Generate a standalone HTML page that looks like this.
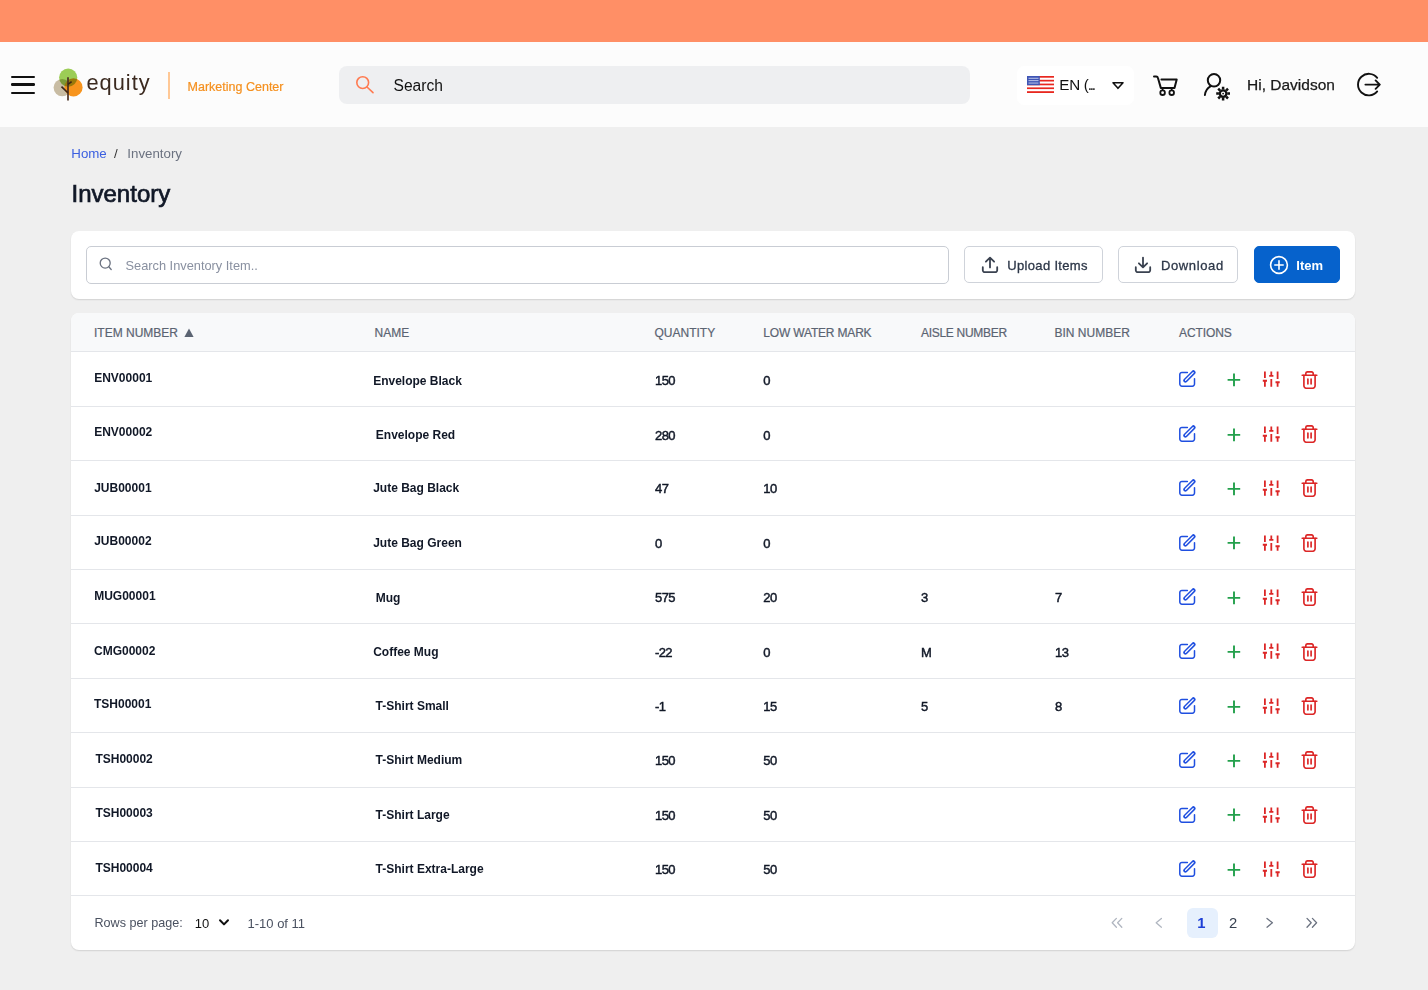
<!DOCTYPE html>
<html><head><meta charset="utf-8">
<title>Inventory</title>
<style>
*{box-sizing:border-box;margin:0;padding:0}
html,body{width:1428px;height:990px;overflow:hidden;background:#efefef;font-family:"Liberation Sans",sans-serif;color:#1f2937;position:relative}
.t{position:absolute;line-height:1;white-space:nowrap}
.ico{position:absolute;line-height:0}
.ic{display:block}
#topbar{position:absolute;left:0;top:0;width:1428px;height:42px;background:#ff8f66}
#header{position:absolute;left:0;top:42px;width:1428px;height:85px;background:#fcfcfc}
.ham{position:absolute;left:10.5px;width:24.5px;height:2.3px;background:#111;border-radius:1.2px}
#search{position:absolute;left:338.5px;top:65.8px;width:631.5px;height:38px;background:#eeeff1;border-radius:8px}
#lang{position:absolute;left:1017px;top:66px;width:117px;height:38.5px;background:#fff;border-radius:7px}
.card{position:absolute;left:71px;width:1284px;background:#fff;border-radius:8px;box-shadow:0 1px 1.5px rgba(0,0,0,0.12)}
#tb{top:230.5px;height:68px}
#sinput{position:absolute;left:86px;top:246px;width:863px;height:38px;border:1px solid #c9cdd4;border-radius:5px}
.btn{position:absolute;top:246.4px;height:36.3px;border:1px solid #cfd3da;border-radius:5px;background:#fff}
#table{top:313.4px;height:636.7px;overflow:hidden}
#thead{position:absolute;left:71px;top:313.4px;width:1284px;height:38.1px;background:#f8f9fa;border-radius:8px 8px 0 0}
.rl{position:absolute;left:71px;width:1284px;height:1px;background:#e4e6ea}
.th{color:#5b6472;-webkit-text-stroke:0.2px #5b6472}
</style></head><body>
<div id="topbar"></div>
<div id="header">
  <div class="ham" style="top:33.5px"></div>
  <div class="ham" style="top:41.3px"></div>
  <div class="ham" style="top:49.6px"></div>
</div>

<!-- logo -->
<svg style="position:absolute;left:50px;top:64px" width="36" height="40" viewBox="0 0 36 40">
  <circle cx="12.2" cy="23.6" r="8.6" fill="#c8bca3"/>
  <circle cx="23.5" cy="23.4" r="9.1" fill="#f7941d"/>
  <circle cx="18.2" cy="13.6" r="9.1" fill="#8dc83a" style="mix-blend-mode:multiply" fill-opacity="0.85"/>
  <path d="M18 13.3V36.6" stroke="#4a3020" stroke-width="1.7"/>
  <path d="M11.5 22.6L17.8 28.7M18 20.4L21.6 17.6" stroke="#3a2418" stroke-width="1.6" fill="none"/>
</svg>
<div class="t" style="left:86.5px;top:72.4px;font-size:21.8px;color:#3b2a20;letter-spacing:1px">equity</div>
<div style="position:absolute;left:168px;top:72.4px;width:1.6px;height:26.4px;background:#ffc896"></div>
<div class="t" style="left:187.6px;top:80.9px;font-size:12.5px;color:#f5901e;-webkit-text-stroke:0.2px #f5901e">Marketing Center</div>

<div id="search"></div>
<svg style="position:absolute;left:354px;top:74px" width="22" height="22" viewBox="0 0 22 22" fill="none" stroke="#ff7a50" stroke-width="1.6" stroke-linecap="round"><circle cx="8.7" cy="8.6" r="5.9"/><path d="M13 13L19 18.7"/></svg>
<div class="t" style="left:393.5px;top:77.6px;font-size:15.6px;color:#111">Search</div>

<div id="lang"></div>
<svg style="position:absolute;left:1026.8px;top:75.9px" width="27.4" height="17" viewBox="0 0 27.4 17">
  <rect width="27.4" height="17" fill="#fff"/>
  <rect y="0" width="27.4" height="1.7" fill="#e8271f"/>
  <rect y="3.8" width="27.4" height="1.7" fill="#e8271f"/>
  <rect y="7.6" width="27.4" height="1.7" fill="#e8271f"/>
  <rect y="11.4" width="27.4" height="1.7" fill="#e8271f"/>
  <rect y="15.2" width="27.4" height="1.8" fill="#e8271f"/>
  <rect width="12.8" height="9.2" fill="#3f55b5"/>
  <g fill="#c9d0f0"><rect x="1.5" y="1.8" width="10" height="0.9"/><rect x="1.5" y="4.2" width="10" height="0.9"/><rect x="1.5" y="6.6" width="10" height="0.9"/></g>
</svg>
<div class="t" style="left:1059.3px;top:77.3px;font-size:15.2px;color:#111;letter-spacing:-0.3px">EN (<span style="font-size:10px;font-weight:bold;letter-spacing:-0.8px">...</span></div>
<svg style="position:absolute;left:1110px;top:80px" width="16" height="11" viewBox="0 0 16 11" fill="none" stroke="#111" stroke-width="1.6" stroke-linejoin="round"><path d="M3 2.8H13L8 8.3Z"/></svg>

<!-- cart -->
<svg style="position:absolute;left:1151px;top:73px" width="30" height="24" viewBox="0 0 30 24" fill="none" stroke="#111" stroke-width="2" stroke-linecap="round" stroke-linejoin="round">
  <path d="M3 3.4H5.2Q6.6 3.4 6.9 4.8L9.8 14.9H23.5L25.7 6.4H10.4"/>
  <path d="M11.6 14.9V17.3M20.7 14.9V17.3" stroke-width="1.6"/>
  <circle cx="11.6" cy="19.7" r="2.3" stroke-width="1.8"/><circle cx="20.7" cy="19.7" r="2.3" stroke-width="1.8"/>
</svg>
<!-- user gear -->
<svg style="position:absolute;left:1200px;top:70px" width="34" height="32" viewBox="0 0 34 32" fill="none" stroke="#111" stroke-width="2" stroke-linecap="round">
  <circle cx="14" cy="10.3" r="6.2"/>
  <path d="M4.9 25A11.5 11.5 0 0 1 10.4 16.4"/>
  <g transform="translate(23.1 23.6)">
    <circle r="3.3" stroke-width="2.3"/>
    <circle r="0.9" fill="#111" stroke="none"/>
    <path d="M0 -6.9V-4.2M0 4.2V6.9M-6.9 0H-4.2M4.2 0H6.9M-4.9 -4.9L-3 -3M3 3L4.9 4.9M-4.9 4.9L-3 3M3 -3L4.9 -4.9" stroke-width="2.5" stroke-linecap="butt"/>
  </g>
</svg>
<div class="t" style="left:1247px;top:77px;font-size:15.5px;color:#1a1a1a;-webkit-text-stroke:0.25px #1a1a1a">Hi, Davidson</div>
<!-- logout -->
<svg style="position:absolute;left:1354px;top:70px" width="32" height="30" viewBox="0 0 32 30" fill="none" stroke="#111" stroke-width="1.9" stroke-linecap="round" stroke-linejoin="round">
  <path d="M23.2 7.8A10.8 10.8 0 1 0 23.2 21.4"/>
  <path d="M11.4 14.6H25.8M21.6 10.4L25.8 14.6L21.6 18.8"/>
</svg>

<!-- breadcrumb & title -->
<div class="t" style="left:71.3px;top:146.6px;font-size:13.3px;color:#3b5fe0">Home</div>
<div class="t" style="left:114px;top:146.6px;font-size:13.3px;color:#333">/</div>
<div class="t" style="left:127.3px;top:146.6px;font-size:13.3px;color:#6b7280">Inventory</div>
<div class="t" style="left:71.5px;top:181.7px;font-size:24px;color:#111827;-webkit-text-stroke:0.7px #111827">Inventory</div>

<!-- toolbar card -->
<div class="card" id="tb"></div>
<div id="sinput"></div>
<svg style="position:absolute;left:97px;top:255px" width="18" height="18" viewBox="0 0 18 18" fill="none" stroke="#6b7280" stroke-width="1.3" stroke-linecap="round"><circle cx="8.2" cy="8.1" r="5"/><path d="M11.8 11.8L14.2 14.5"/></svg>
<div class="t" style="left:125.5px;top:259.9px;font-size:12.8px;color:#8990a0">Search Inventory Item..</div>

<div class="btn" style="left:964.2px;width:139.3px"></div>
<svg style="position:absolute;left:980px;top:255px" width="20" height="20" viewBox="0 0 20 20" fill="none" stroke="#3a4250" stroke-width="1.8" stroke-linecap="round" stroke-linejoin="round"><path d="M2.8 12.2V15.2A2 2 0 0 0 4.8 17.2H15.2A2 2 0 0 0 17.2 15.2V12.2"/><path d="M10 12.4V2.8M5.9 6.7L10 2.6L14.1 6.7"/></svg>
<div class="t" style="left:1007.3px;top:259px;font-size:13px;color:#2d3748;-webkit-text-stroke:0.3px #2d3748;letter-spacing:0.33px">Upload Items</div>

<div class="btn" style="left:1118.4px;width:119.3px"></div>
<svg style="position:absolute;left:1133.2px;top:255px" width="20" height="20" viewBox="0 0 20 20" fill="none" stroke="#3a4250" stroke-width="1.8" stroke-linecap="round" stroke-linejoin="round"><path d="M2.8 12.2V15.2A2 2 0 0 0 4.8 17.2H15.2A2 2 0 0 0 17.2 15.2V12.2"/><path d="M10 2.6V12.2M5.9 8.3L10 12.4L14.1 8.3"/></svg>
<div class="t" style="left:1161px;top:259px;font-size:13px;color:#2d3748;-webkit-text-stroke:0.3px #2d3748;letter-spacing:0.62px">Download</div>

<div class="btn" style="left:1253.7px;width:86.2px;background:#0662cc;border-color:#0662cc"></div>
<svg style="position:absolute;left:1268.7px;top:255.2px" width="20" height="20" viewBox="0 0 20 20" fill="none" stroke="#fff" stroke-width="1.6" stroke-linecap="round"><circle cx="10" cy="10" r="8.4"/><path d="M10 5.8V14.2M5.8 10H14.2"/></svg>
<div class="t" style="left:1296.3px;top:259.3px;font-size:13px;font-weight:bold;color:#fff">Item</div>

<!-- table card -->
<div class="card" id="table"></div>
<div id="thead"></div>
<div class="rl" style="top:351px"></div>
<div class="t th" style="left:94px;top:327.2px;font-size:12px">ITEM NUMBER</div>
<svg style="position:absolute;left:183.5px;top:327.5px" width="10" height="10" viewBox="0 0 10 10"><path d="M5 0.6L9.6 9H0.4Z" fill="#5b6472"/></svg>
<div class="t th" style="left:374.5px;top:327.2px;font-size:12px">NAME</div>
<div class="t th" style="left:654.5px;top:327.2px;font-size:12px">QUANTITY</div>
<div class="t th" style="left:763.3px;top:327.2px;font-size:12px;letter-spacing:-0.18px">LOW WATER MARK</div>
<div class="t th" style="left:921px;top:327.2px;font-size:12px;letter-spacing:-0.3px">AISLE NUMBER</div>
<div class="t th" style="left:1054.5px;top:327.2px;font-size:12px">BIN NUMBER</div>
<div class="t th" style="left:1179px;top:327.2px;font-size:12px;letter-spacing:-0.1px">ACTIONS</div>

<div class="rl" style="top:405.80px"></div>
<div class="t" style="left:94.2px;top:371.74px;font-size:12px;font-weight:bold;color:#111827">ENV00001</div>
<div class="t" style="left:373.2px;top:374.84px;font-size:12px;font-weight:bold;color:#111827">Envelope Black</div>
<div class="t" style="left:655.0px;top:374.15px;font-size:13px;color:#111827;letter-spacing:-0.6px;-webkit-text-stroke:0.45px #111827">150</div>
<div class="t" style="left:763.3px;top:374.15px;font-size:13px;color:#111827;letter-spacing:-0.6px;-webkit-text-stroke:0.45px #111827">0</div>
<div class="ico" style="left:1177.8px;top:370.40px"><svg class="ic" width="18" height="18" viewBox="0 0 18 18" fill="none" stroke="#1f4fe0" stroke-width="1.5" stroke-linecap="round" stroke-linejoin="round"><path d="M9.4 2.4H3.9A2.1 2.1 0 0 0 1.8 4.5V14.1A2.1 2.1 0 0 0 3.9 16.2H14.4A2.1 2.1 0 0 0 16.5 14.1V8.7"/><path d="M7.4 10.4L15.4 2.4" stroke-width="4.3"/><path d="M7.6 10.2L15.2 2.6" stroke="#fff" stroke-width="1.3"/></svg></div>
<div class="ico" style="left:1226.6px;top:373.10px"><svg class="ic" width="14" height="14" viewBox="0 0 14 14" fill="none" stroke="#23a04c" stroke-width="1.9"><path d="M7 0.6V13.2M0.6 6.9H13.2"/></svg></div>
<div class="ico" style="left:1262.3px;top:371.40px"><svg class="ic" width="18" height="17" viewBox="0 0 18 17" fill="none" stroke="#dc2626" stroke-width="1.8" stroke-linecap="butt"><path d="M2.9 0.6V6.9M2.9 9.7V15.7M0.8 9.75H5M9.3 0.6V5.8M7.2 4.95H11.4M9.3 8.1V15.7M15.6 0.6V8.1M13.5 11.25H17.7M15.6 11.25V15.7"/></svg></div>
<div class="ico" style="left:1300.8px;top:370.50px"><svg class="ic" width="17" height="18" viewBox="0 0 17 18" fill="none" stroke="#dc2626" stroke-width="1.65" stroke-linecap="round" stroke-linejoin="round"><path d="M1.2 4.2H15.8"/><path d="M4.8 4.2V2.6A1.8 1.8 0 0 1 6.6 0.8H10.4A1.8 1.8 0 0 1 12.2 2.6V4.2"/><path d="M2.9 4.2V14.8A2.4 2.4 0 0 0 5.3 17.2H11.7A2.4 2.4 0 0 0 14.1 14.8V4.2"/><path d="M6.9 8V13M10.1 8V13"/></svg></div>
<div class="rl" style="top:460.20px"></div>
<div class="t" style="left:94.2px;top:426.34px;font-size:12px;font-weight:bold;color:#111827">ENV00002</div>
<div class="t" style="left:375.8px;top:429.04px;font-size:12px;font-weight:bold;color:#111827">Envelope Red</div>
<div class="t" style="left:655.0px;top:428.55px;font-size:13px;color:#111827;letter-spacing:-0.6px;-webkit-text-stroke:0.45px #111827">280</div>
<div class="t" style="left:763.3px;top:428.55px;font-size:13px;color:#111827;letter-spacing:-0.6px;-webkit-text-stroke:0.45px #111827">0</div>
<div class="ico" style="left:1177.8px;top:424.80px"><svg class="ic" width="18" height="18" viewBox="0 0 18 18" fill="none" stroke="#1f4fe0" stroke-width="1.5" stroke-linecap="round" stroke-linejoin="round"><path d="M9.4 2.4H3.9A2.1 2.1 0 0 0 1.8 4.5V14.1A2.1 2.1 0 0 0 3.9 16.2H14.4A2.1 2.1 0 0 0 16.5 14.1V8.7"/><path d="M7.4 10.4L15.4 2.4" stroke-width="4.3"/><path d="M7.6 10.2L15.2 2.6" stroke="#fff" stroke-width="1.3"/></svg></div>
<div class="ico" style="left:1226.6px;top:427.50px"><svg class="ic" width="14" height="14" viewBox="0 0 14 14" fill="none" stroke="#23a04c" stroke-width="1.9"><path d="M7 0.6V13.2M0.6 6.9H13.2"/></svg></div>
<div class="ico" style="left:1262.3px;top:425.80px"><svg class="ic" width="18" height="17" viewBox="0 0 18 17" fill="none" stroke="#dc2626" stroke-width="1.8" stroke-linecap="butt"><path d="M2.9 0.6V6.9M2.9 9.7V15.7M0.8 9.75H5M9.3 0.6V5.8M7.2 4.95H11.4M9.3 8.1V15.7M15.6 0.6V8.1M13.5 11.25H17.7M15.6 11.25V15.7"/></svg></div>
<div class="ico" style="left:1300.8px;top:424.90px"><svg class="ic" width="17" height="18" viewBox="0 0 17 18" fill="none" stroke="#dc2626" stroke-width="1.65" stroke-linecap="round" stroke-linejoin="round"><path d="M1.2 4.2H15.8"/><path d="M4.8 4.2V2.6A1.8 1.8 0 0 1 6.6 0.8H10.4A1.8 1.8 0 0 1 12.2 2.6V4.2"/><path d="M2.9 4.2V14.8A2.4 2.4 0 0 0 5.3 17.2H11.7A2.4 2.4 0 0 0 14.1 14.8V4.2"/><path d="M6.9 8V13M10.1 8V13"/></svg></div>
<div class="rl" style="top:514.60px"></div>
<div class="t" style="left:94.2px;top:481.54px;font-size:12px;font-weight:bold;color:#111827">JUB00001</div>
<div class="t" style="left:373.2px;top:482.34px;font-size:12px;font-weight:bold;color:#111827">Jute Bag Black</div>
<div class="t" style="left:655.0px;top:482.35px;font-size:13px;color:#111827;letter-spacing:-0.6px;-webkit-text-stroke:0.45px #111827">47</div>
<div class="t" style="left:763.3px;top:482.35px;font-size:13px;color:#111827;letter-spacing:-0.6px;-webkit-text-stroke:0.45px #111827">10</div>
<div class="ico" style="left:1177.8px;top:479.20px"><svg class="ic" width="18" height="18" viewBox="0 0 18 18" fill="none" stroke="#1f4fe0" stroke-width="1.5" stroke-linecap="round" stroke-linejoin="round"><path d="M9.4 2.4H3.9A2.1 2.1 0 0 0 1.8 4.5V14.1A2.1 2.1 0 0 0 3.9 16.2H14.4A2.1 2.1 0 0 0 16.5 14.1V8.7"/><path d="M7.4 10.4L15.4 2.4" stroke-width="4.3"/><path d="M7.6 10.2L15.2 2.6" stroke="#fff" stroke-width="1.3"/></svg></div>
<div class="ico" style="left:1226.6px;top:481.90px"><svg class="ic" width="14" height="14" viewBox="0 0 14 14" fill="none" stroke="#23a04c" stroke-width="1.9"><path d="M7 0.6V13.2M0.6 6.9H13.2"/></svg></div>
<div class="ico" style="left:1262.3px;top:480.20px"><svg class="ic" width="18" height="17" viewBox="0 0 18 17" fill="none" stroke="#dc2626" stroke-width="1.8" stroke-linecap="butt"><path d="M2.9 0.6V6.9M2.9 9.7V15.7M0.8 9.75H5M9.3 0.6V5.8M7.2 4.95H11.4M9.3 8.1V15.7M15.6 0.6V8.1M13.5 11.25H17.7M15.6 11.25V15.7"/></svg></div>
<div class="ico" style="left:1300.8px;top:479.30px"><svg class="ic" width="17" height="18" viewBox="0 0 17 18" fill="none" stroke="#dc2626" stroke-width="1.65" stroke-linecap="round" stroke-linejoin="round"><path d="M1.2 4.2H15.8"/><path d="M4.8 4.2V2.6A1.8 1.8 0 0 1 6.6 0.8H10.4A1.8 1.8 0 0 1 12.2 2.6V4.2"/><path d="M2.9 4.2V14.8A2.4 2.4 0 0 0 5.3 17.2H11.7A2.4 2.4 0 0 0 14.1 14.8V4.2"/><path d="M6.9 8V13M10.1 8V13"/></svg></div>
<div class="rl" style="top:569.00px"></div>
<div class="t" style="left:94.2px;top:535.34px;font-size:12px;font-weight:bold;color:#111827">JUB00002</div>
<div class="t" style="left:373.2px;top:536.74px;font-size:12px;font-weight:bold;color:#111827">Jute Bag Green</div>
<div class="t" style="left:655.0px;top:536.75px;font-size:13px;color:#111827;letter-spacing:-0.6px;-webkit-text-stroke:0.45px #111827">0</div>
<div class="t" style="left:763.3px;top:536.75px;font-size:13px;color:#111827;letter-spacing:-0.6px;-webkit-text-stroke:0.45px #111827">0</div>
<div class="ico" style="left:1177.8px;top:533.60px"><svg class="ic" width="18" height="18" viewBox="0 0 18 18" fill="none" stroke="#1f4fe0" stroke-width="1.5" stroke-linecap="round" stroke-linejoin="round"><path d="M9.4 2.4H3.9A2.1 2.1 0 0 0 1.8 4.5V14.1A2.1 2.1 0 0 0 3.9 16.2H14.4A2.1 2.1 0 0 0 16.5 14.1V8.7"/><path d="M7.4 10.4L15.4 2.4" stroke-width="4.3"/><path d="M7.6 10.2L15.2 2.6" stroke="#fff" stroke-width="1.3"/></svg></div>
<div class="ico" style="left:1226.6px;top:536.30px"><svg class="ic" width="14" height="14" viewBox="0 0 14 14" fill="none" stroke="#23a04c" stroke-width="1.9"><path d="M7 0.6V13.2M0.6 6.9H13.2"/></svg></div>
<div class="ico" style="left:1262.3px;top:534.60px"><svg class="ic" width="18" height="17" viewBox="0 0 18 17" fill="none" stroke="#dc2626" stroke-width="1.8" stroke-linecap="butt"><path d="M2.9 0.6V6.9M2.9 9.7V15.7M0.8 9.75H5M9.3 0.6V5.8M7.2 4.95H11.4M9.3 8.1V15.7M15.6 0.6V8.1M13.5 11.25H17.7M15.6 11.25V15.7"/></svg></div>
<div class="ico" style="left:1300.8px;top:533.70px"><svg class="ic" width="17" height="18" viewBox="0 0 17 18" fill="none" stroke="#dc2626" stroke-width="1.65" stroke-linecap="round" stroke-linejoin="round"><path d="M1.2 4.2H15.8"/><path d="M4.8 4.2V2.6A1.8 1.8 0 0 1 6.6 0.8H10.4A1.8 1.8 0 0 1 12.2 2.6V4.2"/><path d="M2.9 4.2V14.8A2.4 2.4 0 0 0 5.3 17.2H11.7A2.4 2.4 0 0 0 14.1 14.8V4.2"/><path d="M6.9 8V13M10.1 8V13"/></svg></div>
<div class="rl" style="top:623.40px"></div>
<div class="t" style="left:94.2px;top:590.04px;font-size:12px;font-weight:bold;color:#111827">MUG00001</div>
<div class="t" style="left:375.8px;top:591.84px;font-size:12px;font-weight:bold;color:#111827">Mug</div>
<div class="t" style="left:655.0px;top:591.35px;font-size:13px;color:#111827;letter-spacing:-0.6px;-webkit-text-stroke:0.45px #111827">575</div>
<div class="t" style="left:763.3px;top:591.35px;font-size:13px;color:#111827;letter-spacing:-0.6px;-webkit-text-stroke:0.45px #111827">20</div>
<div class="t" style="left:921.0px;top:591.35px;font-size:13px;color:#111827;letter-spacing:-0.6px;-webkit-text-stroke:0.45px #111827">3</div>
<div class="t" style="left:1055.0px;top:591.35px;font-size:13px;color:#111827;letter-spacing:-0.6px;-webkit-text-stroke:0.45px #111827">7</div>
<div class="ico" style="left:1177.8px;top:588.00px"><svg class="ic" width="18" height="18" viewBox="0 0 18 18" fill="none" stroke="#1f4fe0" stroke-width="1.5" stroke-linecap="round" stroke-linejoin="round"><path d="M9.4 2.4H3.9A2.1 2.1 0 0 0 1.8 4.5V14.1A2.1 2.1 0 0 0 3.9 16.2H14.4A2.1 2.1 0 0 0 16.5 14.1V8.7"/><path d="M7.4 10.4L15.4 2.4" stroke-width="4.3"/><path d="M7.6 10.2L15.2 2.6" stroke="#fff" stroke-width="1.3"/></svg></div>
<div class="ico" style="left:1226.6px;top:590.70px"><svg class="ic" width="14" height="14" viewBox="0 0 14 14" fill="none" stroke="#23a04c" stroke-width="1.9"><path d="M7 0.6V13.2M0.6 6.9H13.2"/></svg></div>
<div class="ico" style="left:1262.3px;top:589.00px"><svg class="ic" width="18" height="17" viewBox="0 0 18 17" fill="none" stroke="#dc2626" stroke-width="1.8" stroke-linecap="butt"><path d="M2.9 0.6V6.9M2.9 9.7V15.7M0.8 9.75H5M9.3 0.6V5.8M7.2 4.95H11.4M9.3 8.1V15.7M15.6 0.6V8.1M13.5 11.25H17.7M15.6 11.25V15.7"/></svg></div>
<div class="ico" style="left:1300.8px;top:588.10px"><svg class="ic" width="17" height="18" viewBox="0 0 17 18" fill="none" stroke="#dc2626" stroke-width="1.65" stroke-linecap="round" stroke-linejoin="round"><path d="M1.2 4.2H15.8"/><path d="M4.8 4.2V2.6A1.8 1.8 0 0 1 6.6 0.8H10.4A1.8 1.8 0 0 1 12.2 2.6V4.2"/><path d="M2.9 4.2V14.8A2.4 2.4 0 0 0 5.3 17.2H11.7A2.4 2.4 0 0 0 14.1 14.8V4.2"/><path d="M6.9 8V13M10.1 8V13"/></svg></div>
<div class="rl" style="top:677.80px"></div>
<div class="t" style="left:94.0px;top:644.74px;font-size:12px;font-weight:bold;color:#111827">CMG00002</div>
<div class="t" style="left:373.2px;top:646.34px;font-size:12px;font-weight:bold;color:#111827">Coffee Mug</div>
<div class="t" style="left:655.0px;top:645.85px;font-size:13px;color:#111827;letter-spacing:-0.6px;-webkit-text-stroke:0.45px #111827">-22</div>
<div class="t" style="left:763.3px;top:645.85px;font-size:13px;color:#111827;letter-spacing:-0.6px;-webkit-text-stroke:0.45px #111827">0</div>
<div class="t" style="left:921.0px;top:645.85px;font-size:13px;color:#111827;letter-spacing:-0.6px;-webkit-text-stroke:0.45px #111827">M</div>
<div class="t" style="left:1055.0px;top:645.85px;font-size:13px;color:#111827;letter-spacing:-0.6px;-webkit-text-stroke:0.45px #111827">13</div>
<div class="ico" style="left:1177.8px;top:642.40px"><svg class="ic" width="18" height="18" viewBox="0 0 18 18" fill="none" stroke="#1f4fe0" stroke-width="1.5" stroke-linecap="round" stroke-linejoin="round"><path d="M9.4 2.4H3.9A2.1 2.1 0 0 0 1.8 4.5V14.1A2.1 2.1 0 0 0 3.9 16.2H14.4A2.1 2.1 0 0 0 16.5 14.1V8.7"/><path d="M7.4 10.4L15.4 2.4" stroke-width="4.3"/><path d="M7.6 10.2L15.2 2.6" stroke="#fff" stroke-width="1.3"/></svg></div>
<div class="ico" style="left:1226.6px;top:645.10px"><svg class="ic" width="14" height="14" viewBox="0 0 14 14" fill="none" stroke="#23a04c" stroke-width="1.9"><path d="M7 0.6V13.2M0.6 6.9H13.2"/></svg></div>
<div class="ico" style="left:1262.3px;top:643.40px"><svg class="ic" width="18" height="17" viewBox="0 0 18 17" fill="none" stroke="#dc2626" stroke-width="1.8" stroke-linecap="butt"><path d="M2.9 0.6V6.9M2.9 9.7V15.7M0.8 9.75H5M9.3 0.6V5.8M7.2 4.95H11.4M9.3 8.1V15.7M15.6 0.6V8.1M13.5 11.25H17.7M15.6 11.25V15.7"/></svg></div>
<div class="ico" style="left:1300.8px;top:642.50px"><svg class="ic" width="17" height="18" viewBox="0 0 17 18" fill="none" stroke="#dc2626" stroke-width="1.65" stroke-linecap="round" stroke-linejoin="round"><path d="M1.2 4.2H15.8"/><path d="M4.8 4.2V2.6A1.8 1.8 0 0 1 6.6 0.8H10.4A1.8 1.8 0 0 1 12.2 2.6V4.2"/><path d="M2.9 4.2V14.8A2.4 2.4 0 0 0 5.3 17.2H11.7A2.4 2.4 0 0 0 14.1 14.8V4.2"/><path d="M6.9 8V13M10.1 8V13"/></svg></div>
<div class="rl" style="top:732.20px"></div>
<div class="t" style="left:94.0px;top:698.24px;font-size:12px;font-weight:bold;color:#111827">TSH00001</div>
<div class="t" style="left:375.6px;top:699.54px;font-size:12px;font-weight:bold;color:#111827">T-Shirt Small</div>
<div class="t" style="left:655.0px;top:699.65px;font-size:13px;color:#111827;letter-spacing:-0.6px;-webkit-text-stroke:0.45px #111827">-1</div>
<div class="t" style="left:763.3px;top:699.65px;font-size:13px;color:#111827;letter-spacing:-0.6px;-webkit-text-stroke:0.45px #111827">15</div>
<div class="t" style="left:921.0px;top:699.65px;font-size:13px;color:#111827;letter-spacing:-0.6px;-webkit-text-stroke:0.45px #111827">5</div>
<div class="t" style="left:1055.0px;top:699.65px;font-size:13px;color:#111827;letter-spacing:-0.6px;-webkit-text-stroke:0.45px #111827">8</div>
<div class="ico" style="left:1177.8px;top:696.80px"><svg class="ic" width="18" height="18" viewBox="0 0 18 18" fill="none" stroke="#1f4fe0" stroke-width="1.5" stroke-linecap="round" stroke-linejoin="round"><path d="M9.4 2.4H3.9A2.1 2.1 0 0 0 1.8 4.5V14.1A2.1 2.1 0 0 0 3.9 16.2H14.4A2.1 2.1 0 0 0 16.5 14.1V8.7"/><path d="M7.4 10.4L15.4 2.4" stroke-width="4.3"/><path d="M7.6 10.2L15.2 2.6" stroke="#fff" stroke-width="1.3"/></svg></div>
<div class="ico" style="left:1226.6px;top:699.50px"><svg class="ic" width="14" height="14" viewBox="0 0 14 14" fill="none" stroke="#23a04c" stroke-width="1.9"><path d="M7 0.6V13.2M0.6 6.9H13.2"/></svg></div>
<div class="ico" style="left:1262.3px;top:697.80px"><svg class="ic" width="18" height="17" viewBox="0 0 18 17" fill="none" stroke="#dc2626" stroke-width="1.8" stroke-linecap="butt"><path d="M2.9 0.6V6.9M2.9 9.7V15.7M0.8 9.75H5M9.3 0.6V5.8M7.2 4.95H11.4M9.3 8.1V15.7M15.6 0.6V8.1M13.5 11.25H17.7M15.6 11.25V15.7"/></svg></div>
<div class="ico" style="left:1300.8px;top:696.90px"><svg class="ic" width="17" height="18" viewBox="0 0 17 18" fill="none" stroke="#dc2626" stroke-width="1.65" stroke-linecap="round" stroke-linejoin="round"><path d="M1.2 4.2H15.8"/><path d="M4.8 4.2V2.6A1.8 1.8 0 0 1 6.6 0.8H10.4A1.8 1.8 0 0 1 12.2 2.6V4.2"/><path d="M2.9 4.2V14.8A2.4 2.4 0 0 0 5.3 17.2H11.7A2.4 2.4 0 0 0 14.1 14.8V4.2"/><path d="M6.9 8V13M10.1 8V13"/></svg></div>
<div class="rl" style="top:786.60px"></div>
<div class="t" style="left:95.4px;top:753.34px;font-size:12px;font-weight:bold;color:#111827">TSH00002</div>
<div class="t" style="left:375.6px;top:754.14px;font-size:12px;font-weight:bold;color:#111827">T-Shirt Medium</div>
<div class="t" style="left:655.0px;top:754.25px;font-size:13px;color:#111827;letter-spacing:-0.6px;-webkit-text-stroke:0.45px #111827">150</div>
<div class="t" style="left:763.3px;top:754.25px;font-size:13px;color:#111827;letter-spacing:-0.6px;-webkit-text-stroke:0.45px #111827">50</div>
<div class="ico" style="left:1177.8px;top:751.20px"><svg class="ic" width="18" height="18" viewBox="0 0 18 18" fill="none" stroke="#1f4fe0" stroke-width="1.5" stroke-linecap="round" stroke-linejoin="round"><path d="M9.4 2.4H3.9A2.1 2.1 0 0 0 1.8 4.5V14.1A2.1 2.1 0 0 0 3.9 16.2H14.4A2.1 2.1 0 0 0 16.5 14.1V8.7"/><path d="M7.4 10.4L15.4 2.4" stroke-width="4.3"/><path d="M7.6 10.2L15.2 2.6" stroke="#fff" stroke-width="1.3"/></svg></div>
<div class="ico" style="left:1226.6px;top:753.90px"><svg class="ic" width="14" height="14" viewBox="0 0 14 14" fill="none" stroke="#23a04c" stroke-width="1.9"><path d="M7 0.6V13.2M0.6 6.9H13.2"/></svg></div>
<div class="ico" style="left:1262.3px;top:752.20px"><svg class="ic" width="18" height="17" viewBox="0 0 18 17" fill="none" stroke="#dc2626" stroke-width="1.8" stroke-linecap="butt"><path d="M2.9 0.6V6.9M2.9 9.7V15.7M0.8 9.75H5M9.3 0.6V5.8M7.2 4.95H11.4M9.3 8.1V15.7M15.6 0.6V8.1M13.5 11.25H17.7M15.6 11.25V15.7"/></svg></div>
<div class="ico" style="left:1300.8px;top:751.30px"><svg class="ic" width="17" height="18" viewBox="0 0 17 18" fill="none" stroke="#dc2626" stroke-width="1.65" stroke-linecap="round" stroke-linejoin="round"><path d="M1.2 4.2H15.8"/><path d="M4.8 4.2V2.6A1.8 1.8 0 0 1 6.6 0.8H10.4A1.8 1.8 0 0 1 12.2 2.6V4.2"/><path d="M2.9 4.2V14.8A2.4 2.4 0 0 0 5.3 17.2H11.7A2.4 2.4 0 0 0 14.1 14.8V4.2"/><path d="M6.9 8V13M10.1 8V13"/></svg></div>
<div class="rl" style="top:841.00px"></div>
<div class="t" style="left:95.4px;top:807.34px;font-size:12px;font-weight:bold;color:#111827">TSH00003</div>
<div class="t" style="left:375.6px;top:808.74px;font-size:12px;font-weight:bold;color:#111827">T-Shirt Large</div>
<div class="t" style="left:655.0px;top:808.65px;font-size:13px;color:#111827;letter-spacing:-0.6px;-webkit-text-stroke:0.45px #111827">150</div>
<div class="t" style="left:763.3px;top:808.65px;font-size:13px;color:#111827;letter-spacing:-0.6px;-webkit-text-stroke:0.45px #111827">50</div>
<div class="ico" style="left:1177.8px;top:805.60px"><svg class="ic" width="18" height="18" viewBox="0 0 18 18" fill="none" stroke="#1f4fe0" stroke-width="1.5" stroke-linecap="round" stroke-linejoin="round"><path d="M9.4 2.4H3.9A2.1 2.1 0 0 0 1.8 4.5V14.1A2.1 2.1 0 0 0 3.9 16.2H14.4A2.1 2.1 0 0 0 16.5 14.1V8.7"/><path d="M7.4 10.4L15.4 2.4" stroke-width="4.3"/><path d="M7.6 10.2L15.2 2.6" stroke="#fff" stroke-width="1.3"/></svg></div>
<div class="ico" style="left:1226.6px;top:808.30px"><svg class="ic" width="14" height="14" viewBox="0 0 14 14" fill="none" stroke="#23a04c" stroke-width="1.9"><path d="M7 0.6V13.2M0.6 6.9H13.2"/></svg></div>
<div class="ico" style="left:1262.3px;top:806.60px"><svg class="ic" width="18" height="17" viewBox="0 0 18 17" fill="none" stroke="#dc2626" stroke-width="1.8" stroke-linecap="butt"><path d="M2.9 0.6V6.9M2.9 9.7V15.7M0.8 9.75H5M9.3 0.6V5.8M7.2 4.95H11.4M9.3 8.1V15.7M15.6 0.6V8.1M13.5 11.25H17.7M15.6 11.25V15.7"/></svg></div>
<div class="ico" style="left:1300.8px;top:805.70px"><svg class="ic" width="17" height="18" viewBox="0 0 17 18" fill="none" stroke="#dc2626" stroke-width="1.65" stroke-linecap="round" stroke-linejoin="round"><path d="M1.2 4.2H15.8"/><path d="M4.8 4.2V2.6A1.8 1.8 0 0 1 6.6 0.8H10.4A1.8 1.8 0 0 1 12.2 2.6V4.2"/><path d="M2.9 4.2V14.8A2.4 2.4 0 0 0 5.3 17.2H11.7A2.4 2.4 0 0 0 14.1 14.8V4.2"/><path d="M6.9 8V13M10.1 8V13"/></svg></div>
<div class="rl" style="top:895.40px"></div>
<div class="t" style="left:95.4px;top:861.94px;font-size:12px;font-weight:bold;color:#111827">TSH00004</div>
<div class="t" style="left:375.6px;top:863.34px;font-size:12px;font-weight:bold;color:#111827">T-Shirt Extra-Large</div>
<div class="t" style="left:655.0px;top:863.25px;font-size:13px;color:#111827;letter-spacing:-0.6px;-webkit-text-stroke:0.45px #111827">150</div>
<div class="t" style="left:763.3px;top:863.25px;font-size:13px;color:#111827;letter-spacing:-0.6px;-webkit-text-stroke:0.45px #111827">50</div>
<div class="ico" style="left:1177.8px;top:860.00px"><svg class="ic" width="18" height="18" viewBox="0 0 18 18" fill="none" stroke="#1f4fe0" stroke-width="1.5" stroke-linecap="round" stroke-linejoin="round"><path d="M9.4 2.4H3.9A2.1 2.1 0 0 0 1.8 4.5V14.1A2.1 2.1 0 0 0 3.9 16.2H14.4A2.1 2.1 0 0 0 16.5 14.1V8.7"/><path d="M7.4 10.4L15.4 2.4" stroke-width="4.3"/><path d="M7.6 10.2L15.2 2.6" stroke="#fff" stroke-width="1.3"/></svg></div>
<div class="ico" style="left:1226.6px;top:862.70px"><svg class="ic" width="14" height="14" viewBox="0 0 14 14" fill="none" stroke="#23a04c" stroke-width="1.9"><path d="M7 0.6V13.2M0.6 6.9H13.2"/></svg></div>
<div class="ico" style="left:1262.3px;top:861.00px"><svg class="ic" width="18" height="17" viewBox="0 0 18 17" fill="none" stroke="#dc2626" stroke-width="1.8" stroke-linecap="butt"><path d="M2.9 0.6V6.9M2.9 9.7V15.7M0.8 9.75H5M9.3 0.6V5.8M7.2 4.95H11.4M9.3 8.1V15.7M15.6 0.6V8.1M13.5 11.25H17.7M15.6 11.25V15.7"/></svg></div>
<div class="ico" style="left:1300.8px;top:860.10px"><svg class="ic" width="17" height="18" viewBox="0 0 17 18" fill="none" stroke="#dc2626" stroke-width="1.65" stroke-linecap="round" stroke-linejoin="round"><path d="M1.2 4.2H15.8"/><path d="M4.8 4.2V2.6A1.8 1.8 0 0 1 6.6 0.8H10.4A1.8 1.8 0 0 1 12.2 2.6V4.2"/><path d="M2.9 4.2V14.8A2.4 2.4 0 0 0 5.3 17.2H11.7A2.4 2.4 0 0 0 14.1 14.8V4.2"/><path d="M6.9 8V13M10.1 8V13"/></svg></div>

<!-- footer -->
<div class="t" style="left:94.5px;top:916.8px;font-size:12.6px;color:#4a5160">Rows per page:</div>
<div class="t" style="left:194.8px;top:917.4px;font-size:13px;color:#111">10</div>
<svg style="position:absolute;left:216.6px;top:917px" width="14" height="10" viewBox="0 0 14 10" fill="none" stroke="#111" stroke-width="2" stroke-linecap="round" stroke-linejoin="round"><path d="M3 3.2L7 7.4L11 3.2"/></svg>
<div class="t" style="left:247.5px;top:916.8px;font-size:13px;color:#4a5160">1-10 of 11</div>

<svg style="position:absolute;left:1109px;top:914px" width="16" height="16" viewBox="0 0 16 16" fill="none" stroke="#b0b6c0" stroke-width="1.3" stroke-linecap="round" stroke-linejoin="round"><path d="M7.4 4.4L3.2 8.8L7.4 13.2M12.8 4.4L8.6 8.8L12.8 13.2"/></svg>
<svg style="position:absolute;left:1150.5px;top:914px" width="16" height="16" viewBox="0 0 16 16" fill="none" stroke="#b0b6c0" stroke-width="1.3" stroke-linecap="round" stroke-linejoin="round"><path d="M10.4 4.4L5.2 8.8L10.4 13.2"/></svg>
<div style="position:absolute;left:1186.6px;top:907.7px;width:31.3px;height:30.1px;background:#e6f0fd;border-radius:6px"></div>
<div class="t" style="left:1197.2px;top:916.1px;font-size:14.8px;font-weight:bold;color:#1d3fd6">1</div>
<div class="t" style="left:1229px;top:916.1px;font-size:14.8px;color:#374151">2</div>
<svg style="position:absolute;left:1261.5px;top:914px" width="16" height="16" viewBox="0 0 16 16" fill="none" stroke="#6b7280" stroke-width="1.3" stroke-linecap="round" stroke-linejoin="round"><path d="M5 4.4L10.4 8.8L5 13.2"/></svg>
<svg style="position:absolute;left:1303.5px;top:914px" width="16" height="16" viewBox="0 0 16 16" fill="none" stroke="#6b7280" stroke-width="1.3" stroke-linecap="round" stroke-linejoin="round"><path d="M3 4.4L7.2 8.8L3 13.2M8.4 4.4L12.6 8.8L8.4 13.2"/></svg>
</body></html>
